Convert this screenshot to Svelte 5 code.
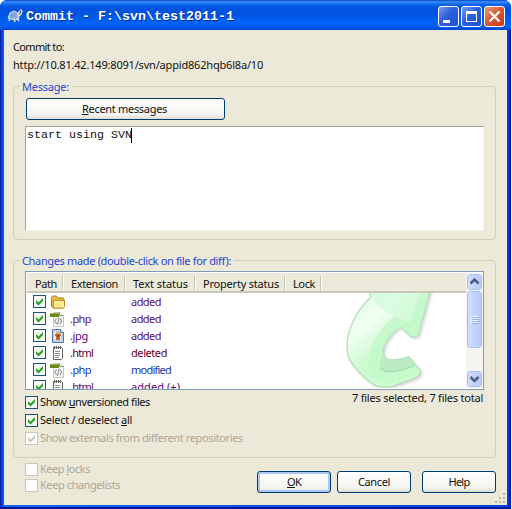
<script>
  const files = [
    { icon: 'folder', ext: '', status: 'added', w: 30, color: '#5b0b72' },
    { icon: 'php', ext: '.php', ew: 21, status: 'added', w: 30, color: '#5b0b72' },
    { icon: 'jpg', ext: '.jpg', ew: 18, status: 'added', w: 30, color: '#5b0b72' },
    { icon: 'html', ext: '.html', ew: 23, status: 'deleted', w: 36, color: '#64001c' },
    { icon: 'php', ext: '.php', ew: 21, status: 'modified', w: 40, color: '#1c34a8' },
    { icon: 'html', ext: '.html', ew: 23, status: 'added (+)', w: 49, color: '#5b0b72' }
  ];

  // Spread a label over a known width.
  function fit(node, width) {
    const range = document.createRange();
    range.selectNodeContents(node);
    const natural = range.getBoundingClientRect().width;
    const count = node.textContent.length;
    if (count > 1) node.style.letterSpacing = (width - natural) / count + 'px';
  }
</script>

{#snippet check(on, disabled)}
  <svg class="check" class:disabled width="13" height="13" viewBox="0 0 13 13">
    <rect x=".5" y=".5" width="12" height="12" fill={disabled ? '#fff' : '#f8f8f4'} stroke={disabled ? '#cac8bb' : '#1c5180'} />
    {#if on}<path d="M3 5v3l2.500 2.500L10 6V3L5.500 7.500z" fill={disabled ? '#cac8bb' : '#21a121'} />{/if}
  </svg>
{/snippet}

{#snippet fileIcon(kind)}
  <svg class="ficon" width="16" height="16" viewBox="0 0 16 16">
    {#if kind === 'folder'}
      <path d="M1.500 3.500l1-1.500h4l1.500 2h5l1 1v8l-1 1h-10l-1.500-2z" fill="#e9bd45" stroke="#ad8017" />
      <path d="M3.500 6.500h11v6l-1 1.500h-10z" fill="#fff1a4" stroke="#bc9126" />
      <path d="M4.500 8.500h9v3h-9z" fill="#ffe37c" />
    {:else if kind === 'php'}
      <path d="M3.500 1.500h7l3 3v11h-10z" fill="#f8f8f5" stroke="#c6c6c0" />
      <path d="M9.500 1.500v3h4" fill="#fff" stroke="#888" />
      <path d="M0 2h9v4H0z" fill="#648b18" /><path d="M0 2h9v1H0z" fill="#91ad43" />
      <path d="M6.500 7.500L5 10l1.500 3M10 7.500l1.500 2.500L10 13M9 6.500L7.500 14" fill="none" stroke="#959595" stroke-width="1.200" />
    {:else if kind === 'jpg'}
      <path d="M2.500 1.500h8l3 3v10h-11z" fill="#bdd3f3" stroke="#5870aa" />
      <path d="M4 4h7v8H4z" fill="#e4eefb" />
      <path d="M5 6h6v2h-1v4H6V8H5z" fill="#ce671f" /><path d="M6 4h4v2H6z" fill="#e7a550" /><path d="M7 7h2v2H7z" fill="#84401a" />
      <path d="M10.500 1.500v3h3" fill="#fff" stroke="#5870aa" />
    {:else}
      <path d="M3.500 2.500h8l1 1v10l-1 1h-8z" fill="#fff" stroke="#62655e" />
      <path d="M4.500 1v3M6.500 1v3M8.500 1v3M10.500 1v3" stroke="#65655c" />
      <path d="M5 6.500h5M5 8.500h5M5 10.500h5M5 12.500h4" stroke="#8390a0" />
    {/if}
  </svg>
{/snippet}

<div class="window">
  <header>
    <svg class="turtle" width="16" height="16" viewBox="0 0 16 16">
      <path d="M1 10l2-5 4-2 4 2 1 5-4 2z" fill="#8baee1" stroke="#dae5f3" />
      <path d="M4 5l5 4M9 4L4 10M3 8h7" stroke="#7c9fd0" />
      <path d="M11 8l1-4 2-2 1 1-1 3-2 2M3 10l-1 3M7 11l1 3M10 10l2 3" fill="none" stroke="#e5e0d2" stroke-width="1.400" />
      <path d="M13 3h1" stroke="#333" />
    </svg>
    <h1>Commit - F:\svn\test2011-1</h1>
    <div class="controls">
      <i class="min"><svg width="21" height="21"><path d="M5 14h7v3H5z" fill="#fff" /></svg></i>
      <i><svg width="21" height="21"><path d="M5 5h11v11H5zM6 8v7h9V8z" fill="#fff" fill-rule="evenodd" /></svg></i>
      <i class="close"><svg width="21" height="21"><path d="M5.500 5.500l10 10M15.500 5.500l-10 10" stroke="#fff" stroke-width="2.300" /></svg></i>
    </div>
  </header>

  <main>
    <div class="target">
      <div><span use:fit={51}>Commit to:</span></div>
      <div><span use:fit={250}>http://10.81.42.149:8091/svn/appid862hqb6l8a/10</span></div>
    </div>

    <section class="message">
      <h2><span use:fit={47}>Message:</span></h2>
      <button class="recent"><span use:fit={85}><u>R</u>ecent messages</span></button>
      <div class="editor">start using SVN<i class="caret"></i></div>
    </section>

    <section class="changes">
      <h2><span use:fit={209}>Changes made (double-click on file for diff):</span></h2>
      <div class="list">
        <div class="columns">
          <div style:width="36px"><span use:fit={22}>Path</span></div>
          <div style:width="62px"><span use:fit={47}>Extension</span></div>
          <div style:width="70px"><span use:fit={55}>Text status</span></div>
          <div style:width="90px"><span use:fit={76}>Property status</span></div>
          <div style:width="36px"><span use:fit={22}>Lock</span></div>
        </div>
        <svg class="mark" width="124" height="95" viewBox="0 129 372 285">
          <defs>
            <linearGradient id="body" x1="0" y1="0" x2=".7" y2="1"><stop offset="0" stop-color="#cdf9d4" /><stop offset=".35" stop-color="#f2fff3" /><stop offset=".62" stop-color="#cdf9d0" /><stop offset="1" stop-color="#d3ffd3" /></linearGradient>
            <filter id="shade" x="-20%" y="-20%" width="150%" height="150%"><feGaussianBlur stdDeviation="4" /></filter>
          </defs>
          <path d="M91 120L93 140C35 195 12 265 25 322Q48 365 95 400Q118 418 155 411L225 386Q247 373 240 360L205 320Q170 336 136 326Q123 310 134 285Q150 253 180 231L211 259Q222 268 235 256L272 120z" fill="#c9c9c9" opacity=".8" transform="translate(6 4)" filter="url(#shade)" />
          <path d="M85 110L93 140C35 195 12 265 25 322Q48 365 95 400Q118 416 155 409L225 384Q245 373 240 360L205 320Q170 336 136 326Q123 310 134 285Q150 253 180 231L211 259Q222 266 234 256L272 110z" fill="url(#body)" stroke="#b5dfbd" stroke-width="4" />
          <path d="M95 110L93 140Q130 190 165 197L211 219L243 110z" fill="#d2fbd8" opacity=".7" />
          <path d="M243 110L211 219L165 197Q85 260 84 350Q90 385 125 403Q185 400 240 367L222 347Q180 370 143 365Q112 355 118 315Q133 267 180 231L220 261L234 256L272 110z" fill="#c0f8c8" opacity=".75" />
          <path d="M134 299Q114 335 120 358Q155 380 224 346L205 320Q155 338 134 322z" fill="#bcebc2" />
          <path d="M120 356Q150 380 224 346" fill="none" stroke="#a4d5ad" stroke-width="3" />
        </svg>
        <div class="rows">
          {#each files as f}
            <div class="row" style:color={f.color}>
              {@render check(true, false)}
              {@render fileIcon(f.icon)}
              <div class="ext">{#if f.ext}<span use:fit={f.ew}>{f.ext}</span>{/if}</div>
              <div><span use:fit={f.w}>{f.status}</span></div>
            </div>
          {/each}
        </div>
        <div class="scroll">
          <div class="arrow"><svg width="15" height="16"><path d="M3.500 9.500l4-4 4 4" fill="none" stroke="#4d6185" stroke-width="2.500" /></svg></div>
          <div class="thumb"><b></b><b></b><b></b><b></b></div>
          <div class="track"></div>
          <div class="arrow"><svg width="15" height="16"><path d="M3.500 6l4 4 4-4" fill="none" stroke="#4d6185" stroke-width="2.500" /></svg></div>
        </div>
      </div>
      <div class="under">
        <div class="options">
          <label>{@render check(true, false)}<span use:fit={110}>Show <u>u</u>nversioned files</span></label>
          <label>{@render check(true, false)}<span use:fit={92}>Select / deselect <u>a</u>ll</span></label>
          <label class="off">{@render check(true, true)}<span use:fit={203}>Show externals from different repositories</span></label>
        </div>
        <div class="count"><span use:fit={131}>7 files selected, 7 files total</span></div>
      </div>
    </section>

    <footer>
      <div class="keep">
        <label class="off">{@render check(false, true)}<span use:fit={50}>Keep <u>l</u>ocks</span></label>
        <label class="off">{@render check(false, true)}<span use:fit={80}>Keep changelists</span></label>
      </div>
      <button class="ok"><span use:fit={14}><u>O</u>K</span></button>
      <button><span use:fit={32}>Cancel</span></button>
      <button class="help"><span use:fit={21}>Help</span></button>
    </footer>
    <svg class="grip" width="12" height="12"><path d="M9 1h2v2H9zM5 5h2v2H5zM9 5h2v2H9zM1 9h2v2H1zM5 9h2v2H5zM9 9h2v2H9z" fill="#b8b4a2" /></svg>
  </main>
</div>

<style>
  :global(body) { background: #fff; overflow: hidden; }
  * { box-sizing: border-box; }
  .window {
    width: 511px; height: 509px; padding: 0 4px 4px; display: flex; flex-direction: column;
    border-radius: 7px 7px 0 0; overflow: hidden;
    background: linear-gradient(90deg, #001ea0 0, #0b3fe0 2px, #1566f0 4px, #0b3fe0 507px, #0535d4 509px, #00138c 511px);
    box-shadow: inset 0 -2px #0019a0;
    font: 11px/14px Tahoma, "Noto Sans", "DejaVu Sans", sans-serif; color: #111; white-space: nowrap;
  }
  header {
    height: 30px; flex: none; margin: 0 -4px; padding: 6px 6px 0 7px; display: flex;
    background: linear-gradient(#0845c2 0, #3b91ff 2px, #1268ee 4px, #0053df 8px, #0055e5 16px, #0262f8 21px, #0262f8 26px, #0046d2 30px);
  }
  .turtle { margin-top: 2px; flex: none; }
  h1 { margin: 3px 0 0 3px; font: bold 13.33px/15px "Liberation Mono", monospace; color: #fff; text-shadow: 1px 1px #0a2b86; }
  .controls { margin-left: auto; display: flex; gap: 2px; }
  .controls i { width: 21px; height: 21px; border: 1px solid #fff; border-radius: 3px; background: linear-gradient(135deg, #789be9, #2b5fe0 45%, #1d4fd3); overflow: hidden; }
  .controls svg { display: block; margin: -1px; }
  .controls .close { background: linear-gradient(135deg, #ec9a82, #dc5430 50%, #c63b14); }
  main { position: relative; flex: 1; width: 503px; padding: 0 9px; background: #ece9d8; display: flex; flex-direction: column; }
  .target { padding-top: 10px; height: 56px; }
  .target div { height: 18px; }
  section { border: 1px solid #d0d0bf; border-radius: 4px; width: 483px; padding: 0 11px; flex: none; }
  h2 { position: relative; margin: -7px 0 0 -5px; width: max-content; padding: 0 3px 0 2px; font: inherit; color: #1c46cf; background: #ece9d8; }
  .message { height: 154px; }
  .changes { height: 198px; margin-top: 20px; }
  button {
    width: 74px; height: 22px; padding: 0; border: 1px solid #003c74; border-radius: 3px; font: inherit; color: #111;
    background: linear-gradient(#fff, #f3f3ef 80%, #dedbd0); display: flex; justify-content: center; align-items: center; flex: none;
  }
  .recent { width: 199px; margin: 4px 0 0 1px; padding-right: 2px; }
  .editor { margin-top: 6px; width: 459px; height: 105px; border: 1px solid #a5a597; border-right-color: #f4f3ea; border-bottom-color: #f4f3ea; background: #fff; padding: 1px; display: flex; font: 11.67px/15px "Liberation Mono", monospace; }
  .caret { width: 1px; height: 15px; margin-left: -1px; background: #000; }
  .list { position: relative; margin-top: 3px; width: 459px; height: 119px; border: 1px solid #7f9db9; background: #fff; overflow: hidden; padding: 1px; }
  .columns { height: 20px; display: flex; padding-top: 3px; background: #ebeadb; border-bottom: 2px solid #cbc7b8; }
  .columns div { height: 14px; padding-left: 8px; border-right: 1px solid #c7c5b2; box-shadow: 1px 0 #fff; line-height: 15px; }
  .mark { position: absolute; left: 314px; top: 21px; }
  .rows { position: relative; }
  .row { display: flex; height: 17px; align-items: center; padding-left: 6px; }
  .check { flex: none; display: block; }
  .ficon { margin-left: 4px; flex: none; }
  .ext { width: 65px; padding-left: 4px; }
  .row > div { line-height: 15px; padding-bottom: 1px; }
  .scroll { position: absolute; right: 0; top: 1px; width: 17px; height: 115px; padding: 1px; display: flex; flex-direction: column; background: #f5f4ee; }
  .arrow, .thumb { width: 15px; border: 1px solid #fff; outline: 1px solid #a9bef0; outline-offset: -1px; border-radius: 3px; background: linear-gradient(90deg, #d0deff, #b8cafb); flex: none; }
  .arrow { height: 16px; }
  .arrow svg { display: block; margin: -1px; }
  .thumb { height: 57px; margin-top: 1px; padding: 24px 0 0 3px; }
  .thumb b { display: block; width: 7px; height: 1px; margin-bottom: 1px; background: #f5f8ff; box-shadow: 1px 1px #8faeea; }
  .track { flex: 1; }
  .under { display: flex; justify-content: space-between; padding-right: 1px; }
  .options { padding-top: 3px; }
  label { display: flex; align-items: center; gap: 2px; height: 18px; }
  .off { color: #aca899; }
  .count { padding-top: 1px; }
  u { text-underline-offset: 1px; text-decoration-thickness: 1px; }
  footer { display: flex; padding-top: 2px; }
  .keep { width: 244px; padding: 1px 0 0 12px; }
  .keep label { height: 16px; }
  footer button { margin: 11px 6px 0 0; }
  footer .help { margin: 11px 0 0 5px; }
  .ok { box-shadow: inset 0 0 0 2px #adc6f4; }
  .grip { position: absolute; right: 1px; bottom: 1px; }
</style>
